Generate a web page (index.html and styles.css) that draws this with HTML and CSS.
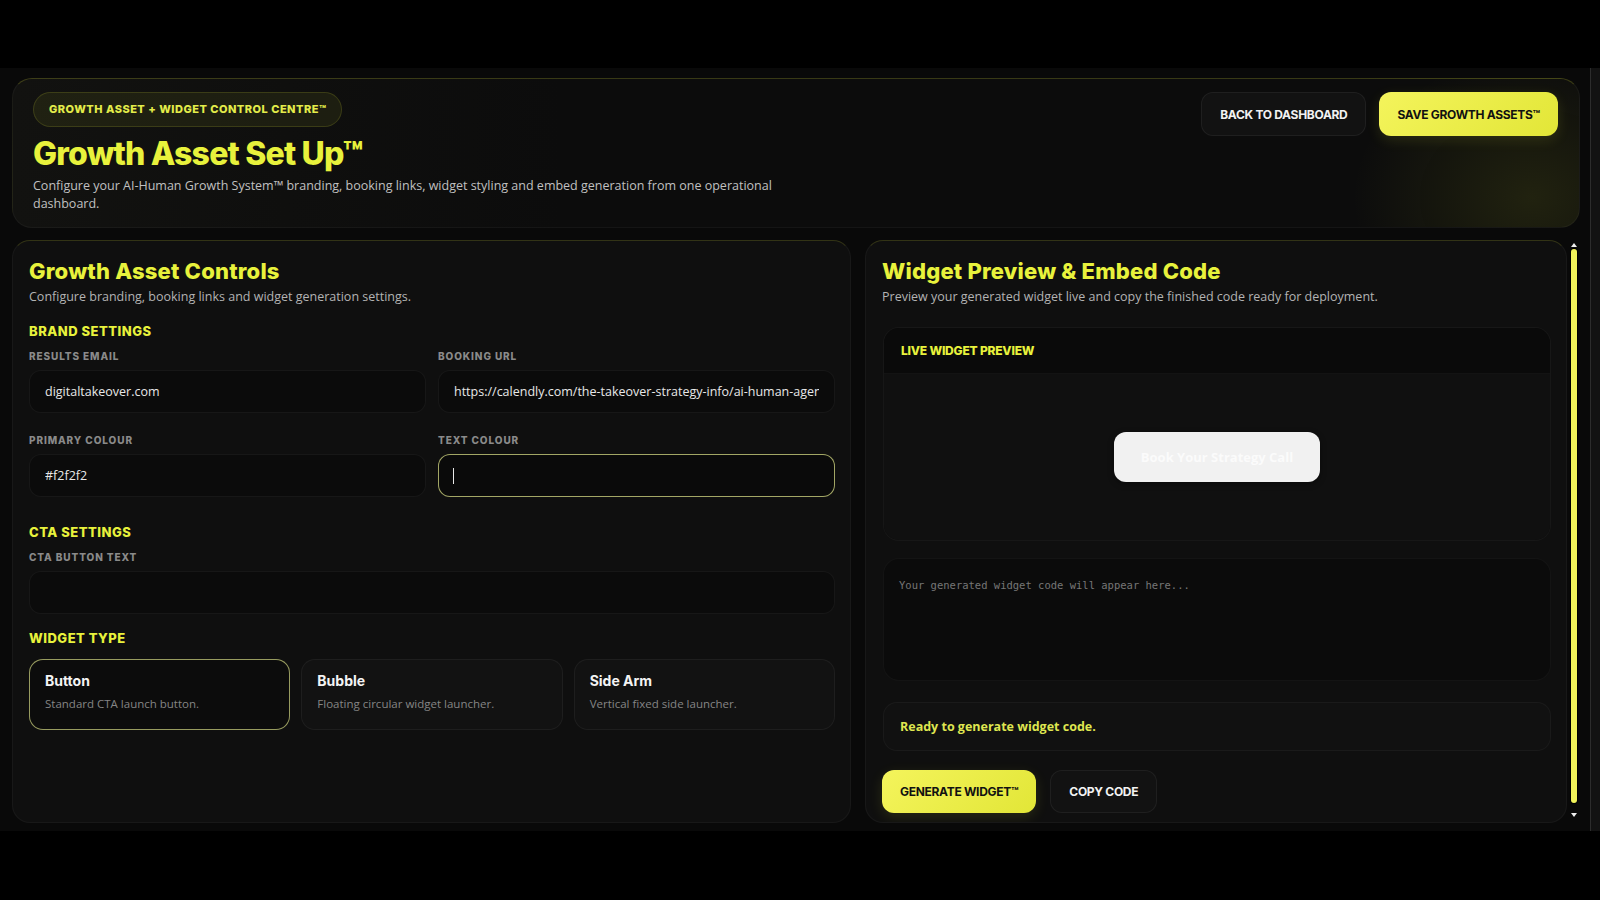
FILE: index.html
```html
<!DOCTYPE html>
<html lang="en">
<head>
    <meta charset="UTF-8">
    <meta name="viewport" content="width=device-width, initial-scale=1.0">
    <title>Growth Asset Set Up</title>
    <link rel="stylesheet" href="styles.css">
</head>
<body>
    <div class="frame">
        <div class="app">
            <header class="hero">
                <div class="hero-text">
                    <span class="badge">Growth Asset + Widget Control Centre™</span>
                    <h1>Growth Asset Set Up™</h1>
                    <p>Configure your AI-Human Growth System™ branding, booking links, widget styling and embed generation from one operational dashboard.</p>
                </div>
                <div class="hero-actions">
                    <button class="btn btn-dark">Back to Dashboard</button>
                    <button class="btn btn-yellow">Save Growth Assets™</button>
                </div>
            </header>

            <main class="workspace">
                <section class="panel controls">
                    <h2>Growth Asset Controls</h2>
                    <p class="lead">Configure branding, booking links and widget generation settings.</p>

                    <h4 class="section-title">Brand Settings</h4>
                    <div class="field-grid">
                        <div class="field">
                            <label for="email">Results Email</label>
                            <input type="text" id="email" value="digitaltakeover.com">
                        </div>
                        <div class="field">
                            <label for="booking">Booking URL</label>
                            <input type="text" id="booking" value="https://calendly.com/the-takeover-strategy-info/ai-human-agent">
                        </div>
                        <div class="field">
                            <label for="primary">Primary Colour</label>
                            <input type="text" id="primary" value="#f2f2f2">
                        </div>
                        <div class="field">
                            <label for="textColour">Text Colour</label>
                            <div class="input-focus">
                                <input type="text" id="textColour" class="is-focused">
                                <span class="caret"></span>
                            </div>
                        </div>
                    </div>

                    <h4 class="section-title cta-title">CTA Settings</h4>
                    <div class="field field-top">
                        <label for="ctaText">CTA Button Text</label>
                        <input type="text" id="ctaText">
                    </div>

                    <h4 class="section-title type-title">Widget Type</h4>
                    <div class="type-grid">
                        <div class="type-card is-active">
                            <h3>Button</h3>
                            <p>Standard CTA launch button.</p>
                        </div>
                        <div class="type-card">
                            <h3>Bubble</h3>
                            <p>Floating circular widget launcher.</p>
                        </div>
                        <div class="type-card">
                            <h3>Side Arm</h3>
                            <p>Vertical fixed side launcher.</p>
                        </div>
                    </div>
                </section>

                <div class="preview-col">
                    <section class="panel preview">
                        <h2>Widget Preview &amp; Embed Code</h2>
                        <p class="lead">Preview your generated widget live and copy the finished code ready for deployment.</p>

                        <div class="live">
                            <div class="live-head">Live Widget Preview</div>
                            <div class="live-stage">
                                <button class="cta-preview">Book Your Strategy Call</button>
                            </div>
                        </div>

                        <textarea class="code" placeholder="Your generated widget code will appear here..." readonly></textarea>

                        <div class="status">Ready to generate widget code.</div>

                        <div class="actions">
                            <button class="btn btn-yellow">Generate Widget™</button>
                            <button class="btn btn-dark">Copy Code</button>
                        </div>
                    </section>
                    <div class="scrollbar">
                        <span class="arrow arrow-up"></span>
                        <span class="thumb"></span>
                        <span class="arrow arrow-down"></span>
                    </div>
                </div>
            </main>
        </div>
        <div class="rail"></div>
    </div>
</body>
</html>
```

FILE: styles.css
```css
* {
    margin: 0;
    padding: 0;
    box-sizing: border-box;
    -webkit-font-smoothing: antialiased;
}

body {
    background: #000;
    font-family: 'Open Sans', sans-serif;
    color: #e6e6e6;
}

.frame {
    display: flex;
    margin-top: 68px;
    height: 763px;
}

.app {
    flex: 1;
    display: flex;
    flex-direction: column;
    gap: 12px;
    padding: 10px 10px 8px 12px;
    background: #090909;
}

.rail {
    width: 10px;
    background: #121212;
    border-left: 1px solid #2c2c2c;
}

/* header */
.hero {
    height: 150px;
    display: flex;
    justify-content: space-between;
    align-items: flex-start;
    padding: 13px 21px 0 20px;
    border-radius: 20px;
    border: 1px solid rgba(255, 255, 255, 0.04);
    border-top-color: rgba(232, 240, 60, 0.2);
    background:
        radial-gradient(ellipse 240px 190px at 97% 80%, rgba(200, 210, 40, 0.11), transparent 75%),
        linear-gradient(90deg, #121210 0%, #0c0c0c 35%, #0c0c0c 100%);
}

.badge {
    display: inline-flex;
    align-items: center;
    height: 35px;
    padding: 0 14px 0 15px;
    border-radius: 18px;
    background: rgba(232, 240, 60, 0.07);
    border: 1px solid rgba(232, 240, 60, 0.14);
    color: #e3ec4a;
    font: 800 11px/1 'Inter', sans-serif;
    letter-spacing: 0.5px;
    text-transform: uppercase;
}

.hero h1 {
    margin-top: 9px;
    font: 800 32px/35px 'Inter', sans-serif;
    letter-spacing: -0.8px;
    color: #e8f23c;
}

.hero p {
    margin-top: 6px;
    max-width: 760px;
    font-size: 12.5px;
    line-height: 18px;
    color: #c0c0c0;
}

.hero-actions {
    display: flex;
    gap: 13px;
}

.btn {
    height: 44px;
    padding: 0 18px;
    border-radius: 12px;
    font: 700 12px 'Inter', sans-serif;
    letter-spacing: -0.3px;
    text-transform: uppercase;
    cursor: pointer;
}

.btn-dark {
    background: #121212;
    border: 1px solid rgba(255, 255, 255, 0.06);
    color: #f2f2f2;
}

.btn-yellow {
    background: linear-gradient(135deg, #f4f45c, #e2e637);
    border: none;
    color: #111;
    box-shadow: 0 4px 14px rgba(230, 240, 60, 0.12);
}

/* panels */
.workspace {
    flex: 1;
    min-height: 0;
    display: grid;
    grid-template-columns: 839px 1fr;
    gap: 14px;
}

.panel {
    background: #0f0f0f;
    border: 1px solid rgba(255, 255, 255, 0.04);
    border-top-color: rgba(232, 240, 60, 0.16);
    border-radius: 18px;
}

.panel h2 {
    font: 800 22px/26px 'Inter', sans-serif;
    letter-spacing: 0.2px;
    color: #e8f23c;
}

.panel .lead {
    margin-top: 4px;
    font-size: 12.5px;
    line-height: 18px;
    color: #b3b3b3;
}

.controls {
    padding: 17px 15px 0 16px;
}

.section-title {
    margin-top: 17px;
    font: 800 13px/16px 'Inter', sans-serif;
    letter-spacing: 0.5px;
    color: #e8f23c;
    text-transform: uppercase;
}

.section-title.cta-title {
    margin-top: 27px;
}

.section-title.type-title {
    margin-top: 16px;
}

.field-grid {
    display: grid;
    grid-template-columns: 1fr 1fr;
    gap: 21px 12px;
    margin-top: 11px;
}

.field-top {
    margin-top: 11px;
}

.field label {
    display: block;
    margin-bottom: 8px;
    font: 800 10px/12px 'Inter', sans-serif;
    letter-spacing: 0.9px;
    color: #8a8a8a;
    text-transform: uppercase;
}

.field input {
    width: 100%;
    height: 43px;
    padding: 0 15px;
    background: #0b0b0b;
    border: 1px solid rgba(255, 255, 255, 0.05);
    border-radius: 12px;
    color: #e8e8e8;
    font: 12.5px 'Open Sans', sans-serif;
    outline: none;
}

.input-focus {
    position: relative;
}

.field input.is-focused {
    border-color: rgba(226, 232, 140, 0.7);
    background: #0a0a0a;
}

.caret {
    position: absolute;
    left: 15px;
    top: 14px;
    width: 1px;
    height: 16px;
    background: #e8e8e8;
}

.type-grid {
    display: grid;
    grid-template-columns: repeat(3, 1fr);
    gap: 11px;
    margin-top: 13px;
}

.type-card {
    height: 71px;
    padding: 12px 15px;
    background: #121212;
    border: 1px solid rgba(255, 255, 255, 0.05);
    border-radius: 14px;
}

.type-card.is-active {
    background: #0c0c0c;
    border-color: rgba(226, 232, 140, 0.65);
}

.type-card h3 {
    font: 700 14px/18px 'Inter', sans-serif;
    color: #f4f4f4;
}

.type-card p {
    margin-top: 6px;
    font-size: 11.5px;
    line-height: 16px;
    color: #858585;
}

/* preview column */
.preview-col {
    display: flex;
    min-height: 0;
}

.preview {
    flex: 1;
    padding: 17px 15px 0 16px;
    overflow: hidden;
}

.live {
    margin-top: 21px;
    margin-left: 1px;
    border-radius: 16px;
    background: #0e0e0e;
    border: 1px solid rgba(255, 255, 255, 0.04);
    overflow: hidden;
}

.live-head {
    height: 46px;
    display: flex;
    align-items: center;
    padding: 0 17px;
    background: #0a0a0a;
    border-bottom: 1px solid rgba(255, 255, 255, 0.04);
    font: 800 12px 'Inter', sans-serif;
    letter-spacing: -0.2px;
    color: #e8f23c;
    text-transform: uppercase;
}

.live-stage {
    height: 166px;
    display: flex;
    align-items: center;
    justify-content: center;
    background: #101010;
}

.cta-preview {
    width: 206px;
    height: 50px;
    border: none;
    border-radius: 12px;
    background: #f1f1f1;
    color: #fbfbfb;
    font: 700 13px 'Open Sans', sans-serif;
    box-shadow: 0 2px 6px rgba(0, 0, 0, 0.4);
}

.code {
    display: block;
    width: calc(100% - 1px);
    height: 123px;
    margin: 17px 0 0 1px;
    padding: 19px 15px;
    resize: none;
    outline: none;
    background: #0b0b0b;
    border: 1px solid rgba(255, 255, 255, 0.04);
    border-radius: 16px;
    font: 10.5px/14px 'DejaVu Sans Mono', monospace;
    color: #bbb;
}

.code::placeholder {
    color: #767676;
}

.status {
    height: 49px;
    margin: 21px 0 0 1px;
    display: flex;
    align-items: center;
    padding: 0 16px;
    background: #111;
    border: 1px solid rgba(255, 255, 255, 0.04);
    border-radius: 14px;
    font: 700 12.5px 'Open Sans', sans-serif;
    color: #dfe650;
}

.actions {
    display: flex;
    gap: 14px;
    margin-top: 19px;
}

.actions .btn {
    height: 43px;
}

.scrollbar {
    width: 13px;
    display: flex;
    flex-direction: column;
    align-items: center;
    gap: 2px;
    padding: 3px 0 6px;
}

.arrow {
    width: 0;
    height: 0;
    border-left: 3px solid transparent;
    border-right: 3px solid transparent;
}

.arrow-up {
    border-bottom: 4px solid #eee;
}

.arrow-down {
    margin-top: 8px;
    border-top: 4px solid #eee;
}

.thumb {
    flex: 1;
    width: 6px;
    border-radius: 3px;
    background: #f1f35a;
    box-shadow: 0 0 0 1px #000;
}
```
